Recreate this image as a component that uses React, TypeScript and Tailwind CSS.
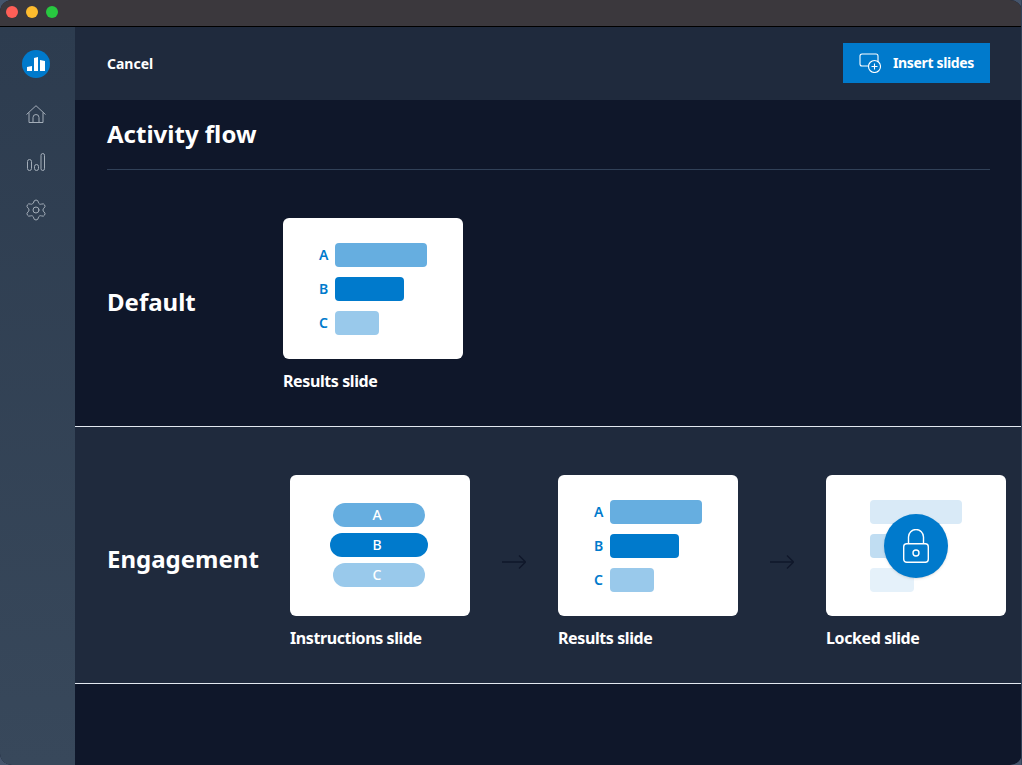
import { Settings } from "lucide-react";

const bars = [
  { letter: "A", width: 92, color: "bg-[#66aee0]" },
  { letter: "B", width: 69, color: "bg-[#007acc]" },
  { letter: "C", width: 44, color: "bg-[#99c9eb]" },
];

const pills = [
  { letter: "A", width: 92, color: "bg-[#66aee0]" },
  { letter: "B", width: 98, color: "bg-[#007acc]" },
  { letter: "C", width: 92, color: "bg-[#99c9eb]" },
];

function Card({ label, children }: { label: string; children: React.ReactNode }) {
  return (
    <div className="w-[180px]">
      <div className="relative flex h-[141px] flex-col justify-center rounded-md bg-white">{children}</div>
      <p className="mt-2.5 text-base font-bold leading-6 tracking-tight text-white">{label}</p>
    </div>
  );
}

function ResultsSlide() {
  return (
    <Card label="Results slide">
      <div className="flex flex-col gap-2.5 pl-9">
        {bars.map((bar) => (
          <div key={bar.letter} className="flex items-center gap-2">
            <span className="w-2 text-sm font-semibold text-[#007acc]">{bar.letter}</span>
            <div className={`h-6 rounded-sm ${bar.color}`} style={{ width: bar.width }} />
          </div>
        ))}
      </div>
    </Card>
  );
}

function InstructionsSlide() {
  return (
    <Card label="Instructions slide">
      <div className="flex flex-col items-center gap-1.5 pb-0.5 pr-0.5">
        {pills.map((pill) => (
          <div
            key={pill.letter}
            className={`flex h-6 items-center justify-center rounded-full pr-1 text-sm font-medium text-white ${pill.color}`}
            style={{ width: pill.width }}
          >
            {pill.letter}
          </div>
        ))}
      </div>
    </Card>
  );
}

function LockedSlide() {
  return (
    <Card label="Locked slide">
      <div className="flex flex-col gap-2.5 pl-11">
        <div className="h-6 w-[92px] rounded-sm bg-[#d9eaf7]" />
        <div className="h-6 w-[69px] rounded-sm bg-[#c0ddf2]" />
        <div className="h-6 w-11 rounded-sm bg-[#e5f1fa]" />
      </div>
      <div className="absolute inset-0 flex items-center justify-center">
        <div className="flex h-16 w-16 items-center justify-center rounded-full bg-[#007acc] shadow">
          <svg viewBox="0 0 26 34" className="h-[34px] w-[26px]" fill="none" stroke="white" strokeWidth="1.4">
            <rect x="0.7" y="14.7" width="24.6" height="18.6" rx="3" />
            <path d="M5.5 14.5V8a7.5 7.5 0 0 1 15 0v6.5" />
            <circle cx="13" cy="24" r="3" />
          </svg>
        </div>
      </div>
    </Card>
  );
}

function Arrow() {
  return (
    <div className="flex w-22 items-center justify-center pb-0.5">
      <svg viewBox="0 0 24 14" className="h-3.5 w-6" fill="none" stroke="#0f172a" strokeWidth="1.3">
        <path d="M0 7h23.5M17 0.5l6.5 6.5-6.5 6.5" />
      </svg>
    </div>
  );
}

function LogoIcon() {
  return (
    <svg viewBox="0 0 28 28" className="h-7 w-7">
      <circle cx="14" cy="14" r="14" fill="#007acc" />
      <path d="M5 17l5-1v5H5zM12 8l4-1v14h-4zM18 10l5 1v10h-5z" fill="white" />
    </svg>
  );
}

function HomeIcon() {
  return (
    <svg viewBox="0 0 20 18" className="h-[18px] w-5" fill="none" stroke="currentColor" strokeWidth="1">
      <path d="M0.5 9.5L10 0.7l9.5 8.8" />
      <path d="M3 7.5v10h14v-10" />
      <path d="M7 17.5v-5a3 3 0 0 1 6 0v5" />
    </svg>
  );
}

function StatsIcon() {
  return (
    <svg viewBox="0 0 18 18" className="h-[18px] w-[18px]" fill="none" stroke="currentColor" strokeWidth="1">
      <rect x="0.5" y="6.5" width="4" height="11" rx="2" />
      <rect x="7.5" y="11.5" width="4" height="6" rx="2" />
      <rect x="14" y="0.5" width="3.5" height="17" rx="1.75" />
    </svg>
  );
}

function InsertIcon() {
  return (
    <svg viewBox="0 0 22 20" className="h-5 w-[22px]" fill="none" stroke="currentColor" strokeWidth="1.1">
      <path d="M9 13H3a2 2 0 0 1-2-2V3a2 2 0 0 1 2-2h14a2 2 0 0 1 2 2v6" />
      <circle cx="15.5" cy="13.5" r="6" />
      <path d="M15.5 10.5v6M12.5 13.5h6" />
    </svg>
  );
}

export default function App() {
  return (
    <div className="relative h-screen bg-slate-600 font-['Noto_Sans',sans-serif] text-white">
      <div className="flex h-full flex-col overflow-hidden rounded-xl bg-[#0f172a]">
        <div className="flex h-[27px] shrink-0 items-center gap-2 border-b border-black bg-[#3b383d] px-1.5 pb-0.5">
          <span className="h-3 w-3 rounded-full bg-[#ff5f57]" />
          <span className="h-3 w-3 rounded-full bg-[#febc2e]" />
          <span className="h-3 w-3 rounded-full bg-[#28c840]" />
        </div>

        <div className="flex min-h-0 flex-1">
          <aside className="flex w-[75px] shrink-0 flex-col items-center bg-linear-to-b from-[#2d3c4f] to-[#38485b] pr-1 pt-[23px] text-[#a3adb8]">
            <div className="mb-3">
              <LogoIcon />
            </div>
            <div className="flex h-12 items-center">
              <HomeIcon />
            </div>
            <div className="flex h-12 items-center">
              <StatsIcon />
            </div>
            <div className="flex h-12 items-center">
              <Settings className="h-6 w-6" strokeWidth={1} />
            </div>
          </aside>

          <main className="min-w-0 flex-1">
            <header className="flex h-[73px] items-center justify-between bg-[#1f2a3d] px-8 pb-0.5">
              <span className="mt-0.5 text-sm font-bold">Cancel</span>
              <button className="flex h-10 items-center gap-3 bg-[#007acc] px-4 text-sm font-bold tracking-tight text-white">
                <InsertIcon />
                Insert slides
              </button>
            </header>

            <div className="mx-8 flex h-[70px] items-center border-b border-slate-700 pb-0.5">
              <h1 className="text-2xl font-bold">Activity flow</h1>
            </div>

            <section className="flex h-[257px] items-start border-b border-slate-200 pl-8 pt-12">
              <div className="flex items-center">
                <h2 className="w-44 pb-2 text-2xl font-bold">Default</h2>
                <ResultsSlide />
              </div>
            </section>

            <section className="flex h-[257px] items-start border-b border-slate-200 bg-[#1f2a3d] pl-8 pt-12">
              <div className="flex">
                <h2 className="w-[183px] self-center pb-2 text-2xl font-bold">Engagement</h2>
                <InstructionsSlide />
                <Arrow />
                <ResultsSlide />
                <Arrow />
                <LockedSlide />
              </div>
            </section>
          </main>
        </div>
      </div>
      <div className="absolute inset-y-0 right-0 w-px bg-slate-700" />
    </div>
  );
}
